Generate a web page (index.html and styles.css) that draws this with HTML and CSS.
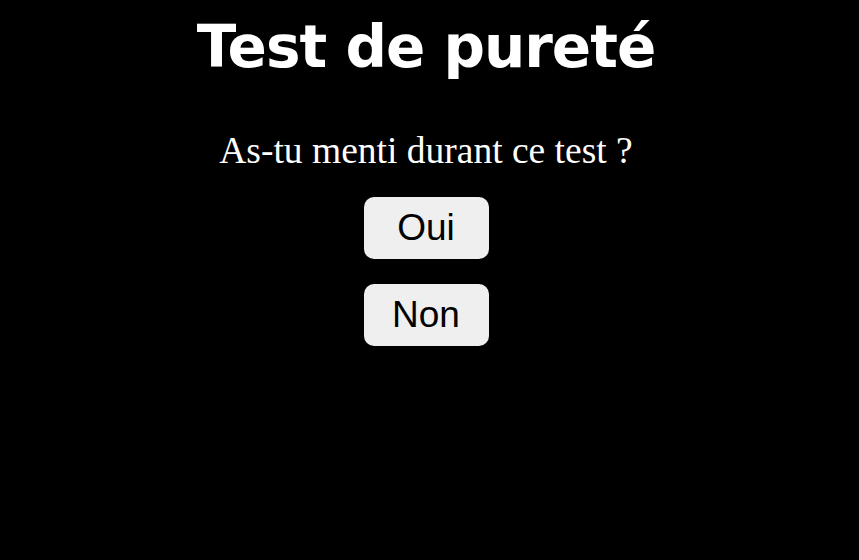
FILE: index.html
```html
<!DOCTYPE html>
<html lang="fr">
<head>
<meta charset="utf-8">
<title>Test de pureté</title>
<link rel="stylesheet" href="styles.css">
</head>
<body>
<main class="page">
  <h1 class="title">Test de pureté</h1>
  <p class="question">As-tu menti durant ce test ?</p>
  <div class="answers">
    <button class="answer">Oui</button>
    <button class="answer">Non</button>
  </div>
</main>
</body>
</html>
```

FILE: styles.css
```css
html, body {
  margin: 0;
  padding: 0;
  background: #000;
  color: #fff;
}
.page {
  display: flex;
  flex-direction: column;
  align-items: center;
  padding-top: 12px;
  padding-right: 7px;
}
.title {
  margin: 0;
  font-family: "Comic Sans MS", "DejaVu Sans", sans-serif;
  font-weight: bold;
  font-size: 58px;
  line-height: 70px;
  letter-spacing: -1px;
}
.question {
  margin: 0;
  margin-top: 48px;
  font-family: "Liberation Serif", "Times New Roman", serif;
  font-size: 37.5px;
  line-height: 42px;
}
.answers {
  display: flex;
  flex-direction: column;
  align-items: center;
  gap: 25px;
  margin-top: 25px;
}
.answer {
  width: 125px;
  height: 62px;
  border: none;
  border-radius: 10px;
  background: #efefef;
  color: #000;
  font-family: "Liberation Sans", Arial, sans-serif;
  font-size: 37px;
  padding: 0;
}
```
